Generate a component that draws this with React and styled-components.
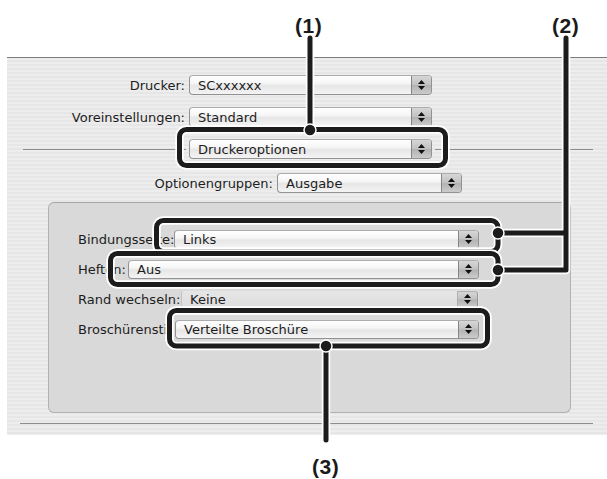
import React from "react";
import styled, { createGlobalStyle, css } from "styled-components";

const GlobalStyle = createGlobalStyle`
  body {
    margin: 0;
    background: #ffffff;
  }
`;

const Page = styled.div`
  position: relative;
  width: 607px;
  height: 479px;
  box-sizing: border-box;
  padding-top: 57px;
  overflow: hidden;
  background: #ffffff;
  font-family: "DejaVu Sans", "Liberation Sans", sans-serif;
  color: #1d1d1d;
`;

const Panel = styled.div`
  margin-left: 7px;
  width: 600px;
  height: 378px;
  box-sizing: border-box;
  padding-top: 17px;
  border-top: 1px solid #7b7b7b;
  background: repeating-linear-gradient(
    to bottom,
    #ededed 0px,
    #ededed 2px,
    #e6e6e6 2px,
    #e6e6e6 4px
  );
  display: flex;
  flex-direction: column;
`;

const TopForm = styled.div`
  display: flex;
  flex-direction: column;
  gap: 12px;
`;

const Row = styled.div`
  display: flex;
  align-items: center;
  gap: 4px;
  height: 20px;
  margin-top: ${({ $offset }) => $offset || 0}px;
`;

const Label = styled.span`
  flex: none;
  width: ${({ $width }) => $width}px;
  text-align: right;
  font-size: 13px;
  white-space: nowrap;
`;

const DividerRow = styled.div`
  display: flex;
  align-items: center;
  gap: 3px;
  height: 20px;
  padding: 0 14px 0 16px;
`;

const Rule = styled.div`
  height: 1px;
  background: #8d8d8d;
  flex: ${({ $width }) => ($width ? "none" : 1)};
  width: ${({ $width }) => ($width ? `${$width}px` : "auto")};
`;

const Popup = styled.div`
  display: flex;
  align-items: stretch;
  box-sizing: border-box;
  height: ${({ $height }) => $height || 20}px;
  flex: ${({ $width }) => ($width ? "none" : 1)};
  width: ${({ $width }) => ($width ? `${$width}px` : "auto")};
  border: 1px solid #929292;
  border-top-color: #acacac;
  border-radius: 4px;
  background: linear-gradient(
    to bottom,
    #ffffff 0%,
    #f6f6f6 40%,
    #e6e6e6 55%,
    #f4f4f4 100%
  );
  ${({ $faded }) =>
    $faded &&
    css`
      border-color: transparent;
      border-left-color: #c4c4c4;
      background: linear-gradient(
        to bottom,
        #e6e6e6 0%,
        #e2e2e2 50%,
        #dddddd 100%
      );
    `}
`;

const PopupText = styled.span`
  flex: 1;
  display: flex;
  align-items: center;
  padding-left: 8px;
  font-size: 13px;
  white-space: nowrap;
  overflow: hidden;
`;

const Stepper = styled.span`
  flex: none;
  width: 19px;
  display: flex;
  flex-direction: column;
  align-items: center;
  justify-content: center;
  gap: 2px;
  border-left: 1px solid #858585;
  border-radius: 0 3px 3px 0;
  background: linear-gradient(
    to bottom,
    #d6d6d6 0%,
    #c2c2c2 48%,
    #b2b2b2 52%,
    #cbcbcb 100%
  );
  ${({ $faded }) =>
    $faded &&
    css`
      border: 1px solid #b0b0b0;
      border-right-color: #969696;
    `}
`;

const GroupBox = styled.div`
  box-sizing: border-box;
  margin: 9px 0 0 41px;
  width: 523px;
  height: 211px;
  padding: 21px 91px 0 29px;
  border: 1px solid #b2b2b2;
  border-top-color: #a6a6a6;
  border-radius: 6px;
  background: #d9d9d9;
`;

const GroupRow = styled.div`
  display: flex;
  align-items: center;
  height: 30px;
`;

const GroupLabel = styled.span`
  flex: none;
  width: ${({ $width }) => $width}px;
  font-size: 13px;
  white-space: nowrap;
  overflow: hidden;
`;

const BottomRule = styled.div`
  margin: 10px 0 0 13px;
  width: 573px;
  height: 1px;
  background: #8d8d8d;
`;

const Overlay = styled.svg`
  position: absolute;
  top: 0;
  left: 0;
  pointer-events: none;
`;

const CalloutLabel = styled.span`
  position: absolute;
  left: ${({ $x }) => $x}px;
  top: ${({ $y }) => $y}px;
  font-family: "Liberation Sans", Arial, sans-serif;
  font-weight: bold;
  font-size: 21px;
  line-height: 21px;
  letter-spacing: 0.5px;
  color: #1a1a1a;
`;

function Arrows({ faded }) {
  return (
    <Stepper $faded={faded}>
      <svg width="7" height="4" viewBox="0 0 7 4">
        <path d="M3.5 0 L7 4 L0 4 Z" fill="#111" />
      </svg>
      <svg width="7" height="4" viewBox="0 0 7 4">
        <path d="M0 0 L7 0 L3.5 4 Z" fill="#111" />
      </svg>
    </Stepper>
  );
}

function PopupButton({ value, width, height, faded }) {
  return (
    <Popup $width={width} $height={height} $faded={faded}>
      <PopupText>{value}</PopupText>
      <Arrows faded={faded} />
    </Popup>
  );
}

const INK = "#1c1c1c";

function Stroke({ d, rect }) {
  const shape = (props) =>
    rect ? <rect {...rect} {...props} /> : <path d={d} {...props} />;
  return (
    <g fill="none" strokeLinecap="round" strokeLinejoin="round">
      {shape({ stroke: "#ffffff", strokeWidth: 8.5 })}
      {shape({ stroke: INK, strokeWidth: 5 })}
    </g>
  );
}

function Dot({ cx, cy }) {
  return <circle cx={cx} cy={cy} r="6" fill={INK} stroke="#fff" strokeWidth="1.5" />;
}

const groupRows = [
  { label: "Bindungsseite:", width: 96, value: "Links" },
  { label: "Heften:", width: 50, value: "Aus" },
  { label: "Rand wechseln:", width: 103, value: "Keine", faded: true },
  { label: "Broschürensti", width: 97, value: "Verteilte Broschüre" },
];

export default function App() {
  return (
    <Page>
      <GlobalStyle />
      <Panel>
        <TopForm>
          <Row>
            <Label $width={178}>Drucker:</Label>
            <PopupButton value="SCxxxxxx" width={243} />
          </Row>
          <Row>
            <Label $width={178}>Voreinstellungen:</Label>
            <PopupButton value="Standard" width={243} />
          </Row>
          <DividerRow>
            <Rule $width={163} />
            <PopupButton value="Druckeroptionen" width={243} />
            <Rule />
          </DividerRow>
          <Row $offset={2}>
            <Label $width={266}>Optionengruppen:</Label>
            <PopupButton value="Ausgabe" width={185} />
          </Row>
        </TopForm>

        <GroupBox>
          {groupRows.map((row) => (
            <GroupRow key={row.label}>
              <GroupLabel $width={row.width}>{row.label}</GroupLabel>
              <PopupButton value={row.value} height={19} faded={row.faded} />
            </GroupRow>
          ))}
        </GroupBox>

        <BottomRule />
      </Panel>

      <Overlay width="607" height="479" viewBox="0 0 607 479">
        <Stroke rect={{ x: 179.5, y: 129.5, width: 266, height: 36, rx: 7 }} />
        <Stroke d="M310 38 V129.5" />
        <Dot cx={310} cy={130} />

        <Stroke rect={{ x: 156.5, y: 220.5, width: 341.5, height: 31, rx: 7 }} />
        <Stroke rect={{ x: 110.5, y: 253.5, width: 387.5, height: 31, rx: 7 }} />
        <Stroke d="M566 38 V270 H498 M566 233 H498" />
        <Dot cx={498} cy={233} />
        <Dot cx={498} cy={270} />

        <Stroke rect={{ x: 169.5, y: 310.5, width: 318, height: 35.5, rx: 7 }} />
        <Stroke d="M326 346 V440" />
        <Dot cx={326} cy={346} />
      </Overlay>

      <CalloutLabel $x={295} $y={15}>(1)</CalloutLabel>
      <CalloutLabel $x={552} $y={15}>(2)</CalloutLabel>
      <CalloutLabel $x={312} $y={456}>(3)</CalloutLabel>
    </Page>
  );
}
